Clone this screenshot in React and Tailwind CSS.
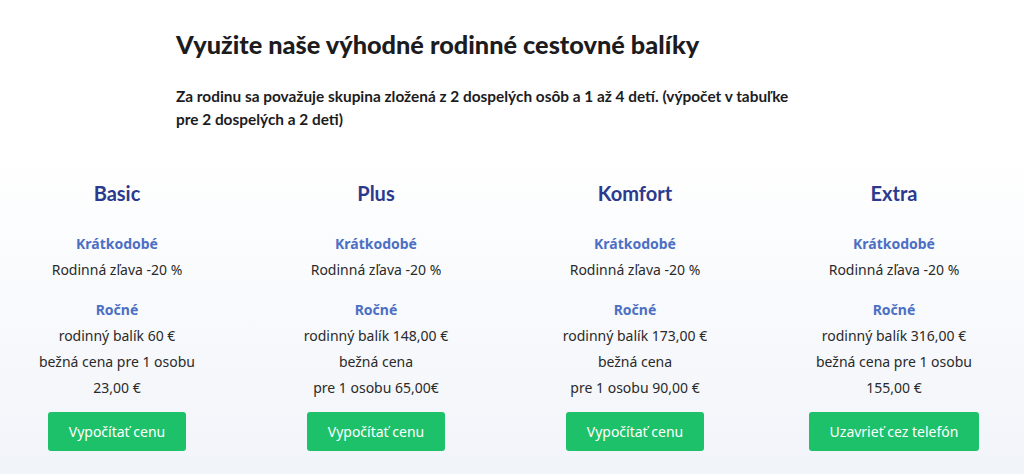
import React from "react";

const plans = [
  { name: "Basic", lines: ["rodinný balík 60 €", "bežná cena pre 1 osobu", "23,00 €"], btn: "Vypočítať cenu" },
  { name: "Plus", lines: ["rodinný balík 148,00 €", "bežná cena", "pre 1 osobu 65,00€"], btn: "Vypočítať cenu" },
  { name: "Komfort", lines: ["rodinný balík 173,00 €", "bežná cena", "pre 1 osobu 90,00 €"], btn: "Vypočítať cenu" },
  { name: "Extra", lines: ["rodinný balík 316,00 €", "bežná cena pre 1 osobu", "155,00 €"], btn: "Uzavrieť cez telefón" },
];

export default function App() {
  return (
    <div className="w-[1024px] h-[474px] overflow-hidden bg-white">
      <div className="pl-[176px] pt-[27px] h-[150px]" style={{ fontFamily: "Lato, 'Noto Sans', sans-serif" }}>
        <h2 className="text-[25.3px] leading-[34px] font-black text-[#1c1c1e]">Využite naše výhodné rodinné cestovné balíky</h2>
        <p className="mt-[24px] w-[630px] text-[15.4px] leading-[23px] font-bold text-[#1c1c1e]">
          Za rodinu sa považuje skupina zložená z 2 dospelých osôb a 1 až 4 detí. (výpočet v tabuľke pre 2 dospelých a 2 deti)
        </p>
      </div>
      <div className="h-[324px] bg-gradient-to-b from-white to-[#f1f4f9]">
        <div className="grid grid-cols-[234px_234px_234px_234px] gap-x-[25px] pt-[29px]">
          {plans.map((p) => (
            <div key={p.name} className="flex flex-col items-center text-center" style={{ fontFamily: "'Noto Sans', 'Open Sans', sans-serif" }}>
              <div className="text-[20px] leading-[28px] font-bold text-[#2b3a8f]" style={{ fontFamily: "Lato, sans-serif" }}>{p.name}</div>
              <div className="mt-[24px] text-[14px] leading-[26px] font-bold text-[#4c6fc4]">Krátkodobé</div>
              <div className="text-[14px] leading-[26px] text-[#2a2a2a]">Rodinná zľava -20 %</div>
              <div className="mt-[14px] text-[14px] leading-[26px] font-bold text-[#4c6fc4]">Ročné</div>
              {p.lines.map((l, i) => (
                <div key={i} className="text-[14px] leading-[26px] text-[#2a2a2a]">{l}</div>
              ))}
              <button className="mt-[11px] h-[39px] px-[21px] rounded-[3px] bg-[#1dc16a] text-white text-[14px]">{p.btn}</button>
            </div>
          ))}
        </div>
      </div>
    </div>
  );
}
